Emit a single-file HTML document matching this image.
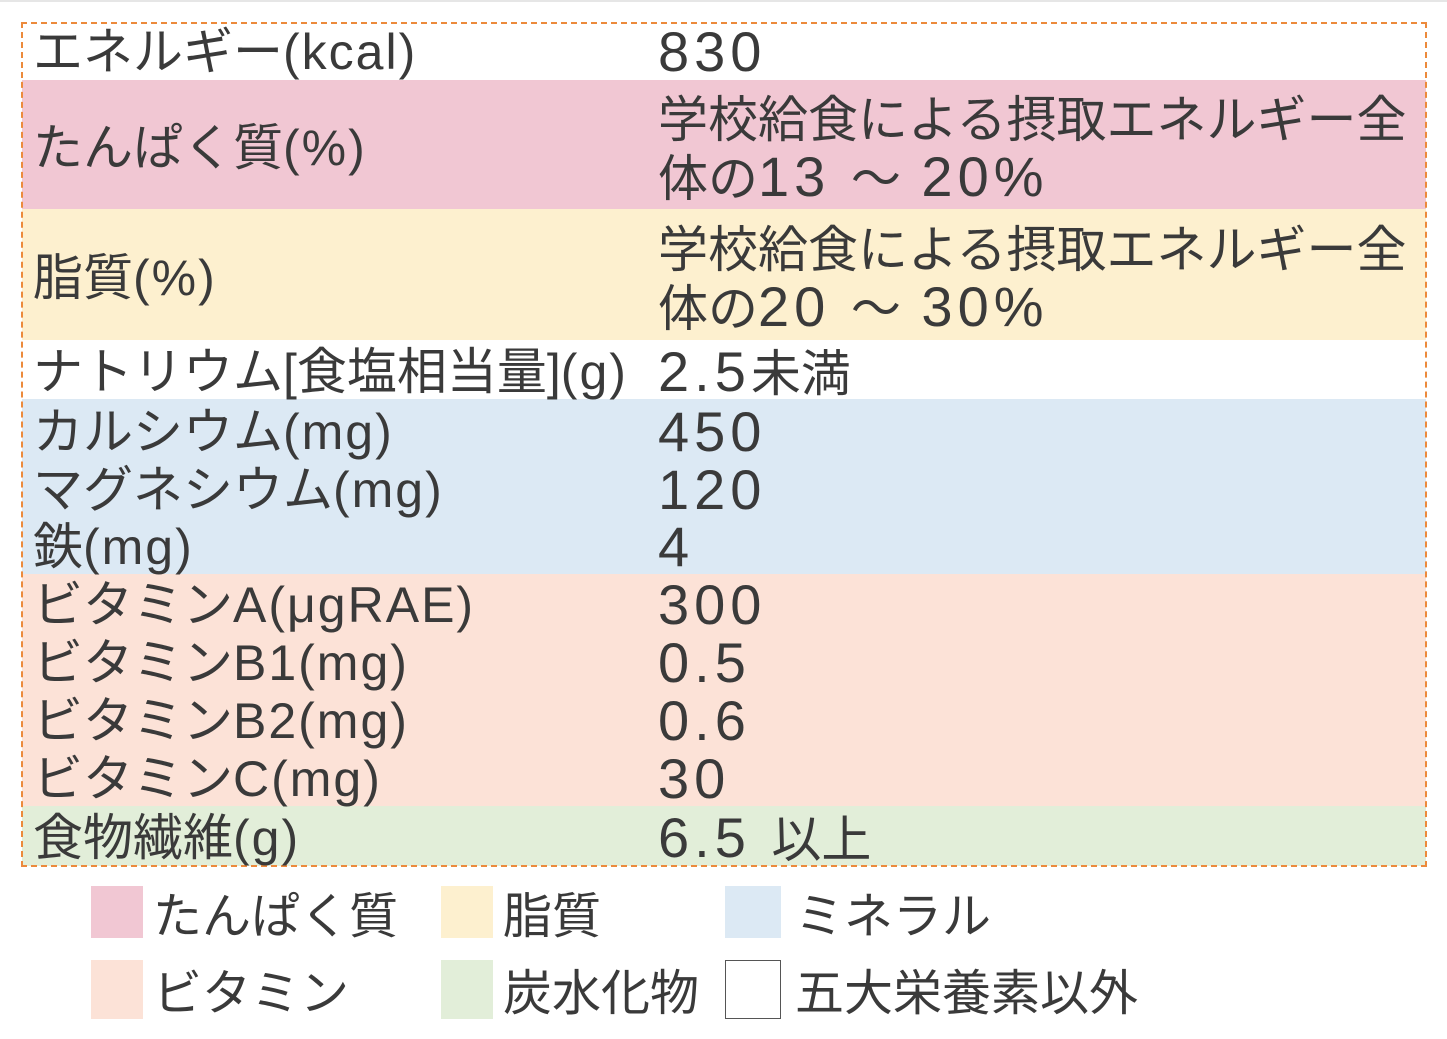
<!DOCTYPE html><html><head><meta charset="utf-8"><style>
body{margin:0;width:1447px;height:1039px;background:#fff;position:relative;overflow:hidden;font-family:"Liberation Sans","Noto Sans CJK JP",sans-serif;color:#3a3a3a}
.bg{position:absolute;left:22px;width:1404px}
.t{position:absolute;font-size:50px;line-height:58px;height:58px;white-space:nowrap}
.a{letter-spacing:5px;font-size:56px}
.b{letter-spacing:2px}
.box{position:absolute;left:21px;top:22px;width:1402px;height:841px;border:2px dashed #ec8a3c}
.sq{position:absolute;width:52px;height:52px}
.lg{position:absolute;font-size:49px;line-height:58px;white-space:nowrap}
</style></head><body>
<div style="position:absolute;left:0;top:0;width:1447px;height:2px;background:#e6e6e6"></div>
<div class="bg" style="top:80px;height:129px;background:#f1c7d3"></div>
<div class="bg" style="top:209px;height:131px;background:#fdf0cf"></div>
<div class="bg" style="top:399px;height:175px;background:#dce9f4"></div>
<div class="bg" style="top:574px;height:232px;background:#fce2d7"></div>
<div class="bg" style="top:806px;height:60px;background:#e2eed9"></div>
<div class="box"></div>
<div class="t" style="left:33px;top:23px">エネルギー<span class="b">(kcal)</span></div><div class="t" style="left:658px;top:23px"><span class="a">830</span></div>
<div class="t" style="left:33px;top:119px">たんぱく質<span class="b">(%)</span></div>
<div class="t" style="left:658px;top:91px">学校給食による摂取エネルギー全</div>
<div class="t" style="left:658px;top:148px">体の<span class="a">13 </span>～<span class="a"> 20%</span></div>
<div class="t" style="left:33px;top:249px">脂質<span class="b">(%)</span></div>
<div class="t" style="left:658px;top:221px">学校給食による摂取エネルギー全</div>
<div class="t" style="left:658px;top:278px">体の<span class="a">20 </span>～<span class="a"> 30%</span></div>
<div class="t" style="left:33px;top:343px">ナトリウム[食塩相当量]<span class="b">(g)</span></div><div class="t" style="left:658px;top:343px"><span class="a">2.5</span>未満</div>
<div class="t" style="left:33px;top:403px">カルシウム<span class="b">(mg)</span></div><div class="t" style="left:658px;top:403px"><span class="a">450</span></div>
<div class="t" style="left:33px;top:461px">マグネシウム<span class="b">(mg)</span></div><div class="t" style="left:658px;top:461px"><span class="a">120</span></div>
<div class="t" style="left:33px;top:518px">鉄<span class="b">(mg)</span></div><div class="t" style="left:658px;top:518px"><span class="a">4</span></div>
<div class="t" style="left:33px;top:576px">ビタミン<span class="b">A(μgRAE)</span></div><div class="t" style="left:658px;top:576px"><span class="a">300</span></div>
<div class="t" style="left:33px;top:634px">ビタミン<span class="b">B1(mg)</span></div><div class="t" style="left:658px;top:634px"><span class="a">0.5</span></div>
<div class="t" style="left:33px;top:692px">ビタミン<span class="b">B2(mg)</span></div><div class="t" style="left:658px;top:692px"><span class="a">0.6</span></div>
<div class="t" style="left:33px;top:750px">ビタミン<span class="b">C(mg)</span></div><div class="t" style="left:658px;top:750px"><span class="a">30</span></div>
<div class="t" style="left:33px;top:809px">食物繊維<span class="b">(g)</span></div><div class="t" style="left:658px;top:809px"><span class="a">6.5 </span>以上</div>
<div class="sq" style="left:91px;top:886px;background:#f1c7d3"></div><div class="lg" style="left:153px;top:888px">たんぱく質</div>
<div class="sq" style="left:441px;top:886px;background:#fdf0cf"></div><div class="lg" style="left:503px;top:888px">脂質</div>
<div class="sq" style="left:725px;top:886px;width:56px;background:#dce9f4"></div><div class="lg" style="left:795px;top:888px">ミネラル</div>
<div class="sq" style="left:91px;top:960px;height:59px;background:#fce2d7"></div><div class="lg" style="left:153px;top:965px">ビタミン</div>
<div class="sq" style="left:441px;top:960px;height:59px;background:#e2eed9"></div><div class="lg" style="left:503px;top:965px">炭水化物</div>
<div class="sq" style="left:725px;top:960px;width:54px;height:57px;border:1px solid #555;background:#fff"></div><div class="lg" style="left:795px;top:965px">五大栄養素以外</div>
</body></html>
